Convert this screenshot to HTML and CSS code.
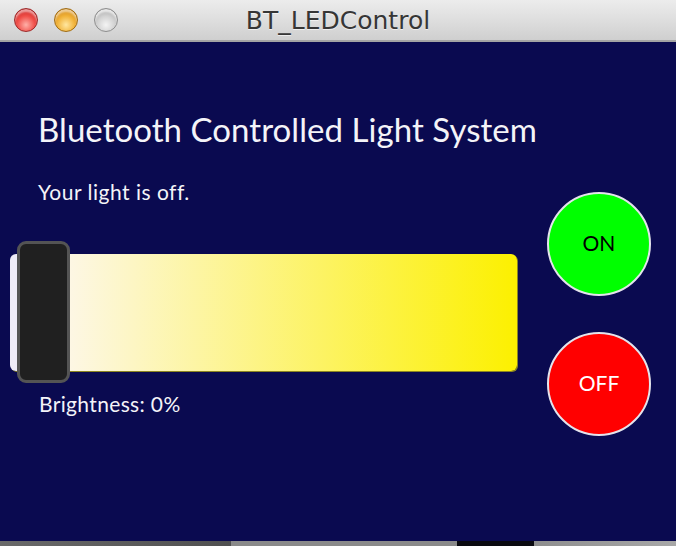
FILE: index.html
```html
<!DOCTYPE html>
<html lang="en">
<head>
<meta charset="utf-8">
<title>BT_LEDControl</title>
<link rel="stylesheet" href="styles.css">
</head>
<body>
<div class="window">
  <header class="titlebar">
    <div class="lights">
      <span class="light red"></span>
      <span class="light yellow"></span>
      <span class="light gray"></span>
    </div>
    <div class="title">BT_LEDControl</div>
    <div></div>
  </header>
  <main class="content">
    <h1 class="heading">Bluetooth Controlled Light System</h1>
    <div class="row">
      <div class="left">
        <p class="status">Your light is off.</p>
        <div class="slider">
          <div class="track"></div>
          <div class="thumb"></div>
        </div>
        <p class="brightness">Brightness: 0%</p>
      </div>
      <div class="buttons">
        <button class="btn on">ON</button>
        <button class="btn off">OFF</button>
      </div>
    </div>
  </main>
  <footer class="strip">
    <span class="seg s1"></span>
    <span class="seg s2"></span>
    <span class="seg s3"></span>
    <span class="seg s4"></span>
  </footer>
</div>
</body>
</html>
```
FILE: styles.css
```css
html, body {
  margin: 0;
  padding: 0;
  background: #0a0a50;
}
.window {
  width: 676px;
  height: 546px;
  display: flex;
  flex-direction: column;
  overflow: hidden;
}
.titlebar {
  height: 40px;
  flex: 0 0 40px;
  border-bottom: 2px solid #a4a4a4;
  background: linear-gradient(to bottom, #ececec 0%, #dedede 50%, #cfcfcf 100%);
  display: grid;
  grid-template-columns: 1fr auto 1fr;
  align-items: center;
}
.lights {
  display: flex;
  gap: 16px;
  padding-left: 14px;
}
.light {
  width: 24px;
  height: 24px;
  border-radius: 50%;
  box-sizing: border-box;
}
.light.red {
  background: radial-gradient(circle at 50% 72%, #ffb0a8 0%, #f0504a 45%, #c81e1e 85%);
  border: 1px solid #9c2a2a;
  box-shadow: inset 0 3px 2px rgba(255,255,255,0.55);
}
.light.yellow {
  background: radial-gradient(circle at 50% 72%, #ffe7a0 0%, #f1b33a 45%, #cf8410 85%);
  border: 1px solid #a06c14;
  box-shadow: inset 0 3px 2px rgba(255,255,255,0.55);
}
.light.gray {
  background: radial-gradient(circle at 50% 72%, #f4f4f4 0%, #d2d2d2 45%, #a8a8a8 85%);
  border: 1px solid #8e8e8e;
  box-shadow: inset 0 3px 2px rgba(255,255,255,0.7);
}
.title {
  font-family: "DejaVu Sans", sans-serif;
  font-size: 25px;
  color: #363636;
  text-shadow: 0 1px 0 rgba(255,255,255,0.6);
}
.content {
  flex: 1 1 auto;
  background: #0a0a50;
  padding-top: 69px;
  font-family: Lato, "Open Sans", sans-serif;
  color: #f4f4f8;
}
.heading {
  margin: 0 0 32px 38px;
  font-size: 33px;
  line-height: 37px;
  font-weight: normal;
  letter-spacing: 0.05px;
}
.row {
  display: grid;
  grid-template-columns: 507px 104px;
  column-gap: 30px;
  padding-left: 10px;
}
.status {
  margin: 0 0 37px 28px;
  font-size: 21px;
  line-height: 24px;
  letter-spacing: 0.5px;
}
.slider {
  position: relative;
  height: 142px;
}
.track {
  position: absolute;
  left: 0;
  right: 0;
  top: 13px;
  height: 117px;
  border-radius: 6px;
  background: linear-gradient(to right, #eeebf7 0, #eeebf7 58px, #fdf7e4 60px, #fcf000 100%);
  box-shadow: 1px 1px 0 #8c8620;
}
.thumb {
  position: absolute;
  left: 7px;
  top: 0;
  width: 53px;
  height: 142px;
  box-sizing: border-box;
  border: 3px solid #545454;
  border-radius: 9px;
  background: #202020;
}
.brightness {
  margin: 9px 0 0 29px;
  font-size: 21px;
  line-height: 24px;
  letter-spacing: 0.35px;
}
.buttons {
  display: flex;
  flex-direction: column;
  gap: 36px;
  padding-top: 12px;
}
.btn {
  width: 104px;
  height: 104px;
  border-radius: 50%;
  border: 2px solid #e4e4ec;
  box-sizing: border-box;
  font-family: Lato, "Open Sans", sans-serif;
  font-size: 21px;
  padding: 0 0 3px 0;
}
.btn.on {
  background: #00ff00;
  color: #000;
}
.btn.off {
  background: #ff0000;
  color: #fff;
}
.strip {
  flex: 0 0 5px;
  height: 5px;
  display: flex;
}
.seg { height: 5px; }
.s1 { width: 231px; background: linear-gradient(to right, #6a6a6a, #505050); }
.s2 { width: 226px; background: #8a8a8a; }
.s3 { width: 77px; background: #0a0a10; }
.s4 { flex: 1; background: linear-gradient(to right, #8e8e8e, #a8a8a8); }
```
